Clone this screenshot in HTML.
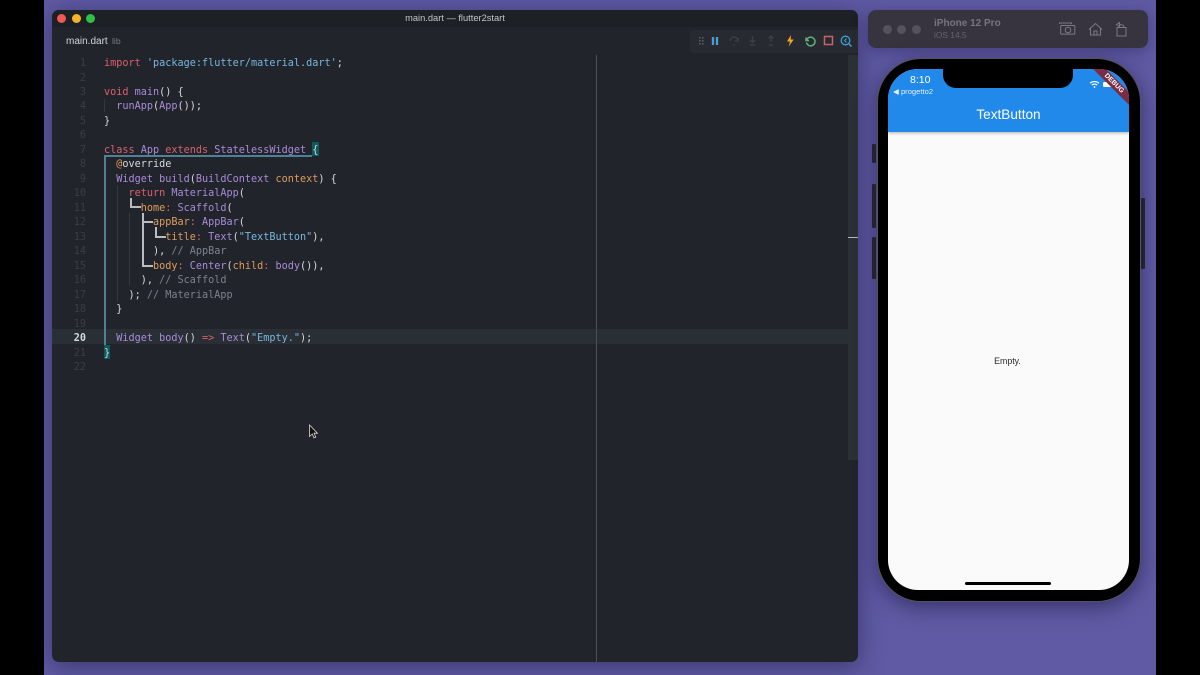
<!DOCTYPE html>
<html><head><meta charset="utf-8"><style>
html,body{margin:0;padding:0;background:#000;width:1200px;height:675px;overflow:hidden}
div{position:absolute;box-sizing:border-box}
#bg{left:44px;top:0;width:1112px;height:675px;background:#5f5aa3}
#win{left:52px;top:10px;width:806px;height:652px;background:#21252b;border-radius:7px;overflow:hidden;box-shadow:0 4px 24px rgba(30,25,70,.55)}
.c{position:absolute;border-radius:50%;width:9px;height:9px;top:14px}
.code{font:10.18px/14.476px "DejaVu Sans Mono","Liberation Mono",monospace;white-space:pre;color:#d5d8de;margin-top:2px;filter:blur(.25px)}
.n{left:60px;width:26px;text-align:right;color:#383e46;font:10.18px/14.476px "DejaVu Sans Mono",monospace;margin-top:2px;filter:blur(.3px)}
.k{color:#dc5f6e}.p{color:#a98ad8}.s{color:#78b6de}.o{color:#de9a5e}.m{color:#7c828c}
.g{background:#343941}.b{background:#4f8095}.w{background:#b9bcc1}
.sans{font-family:"Liberation Sans",sans-serif}
</style></head><body>
<div id="bg"></div>
<div id="win"></div>
<div style="left:52px;top:10px;width:806px;height:17px;background:#1d2025;border-radius:7px 7px 0 0"></div>
<div class="c" style="left:57px;background:#ee5a52"></div>
<div class="c" style="left:72px;background:#f4b32b"></div>
<div class="c" style="left:86px;background:#2fc143"></div>
<div class="sans" style="left:52px;top:12px;width:806px;text-align:center;font-size:9.3px;line-height:13px;color:#c3c6cb">main.dart — flutter2start</div>
<div class="sans" style="left:66px;top:35px;font-size:10px;line-height:13px;color:#d2d5da">main.dart</div>
<div class="sans" style="left:112px;top:35px;font-size:8.6px;line-height:13px;color:#777c85">lib</div>

<div style="left:52px;top:329px;width:806px;height:15px;background:#2a2e35"></div>
<div style="left:596px;top:55px;width:1px;height:607px;background:#4a4e55"></div>
<div style="left:848px;top:55px;width:10px;height:405px;background:#2b3035"></div>
<div style="left:848px;top:237px;width:10px;height:1px;background:#b5b8bc"></div>

<div class="n" style="top:55px">1</div>
<div class="n" style="top:69.5px">2</div>
<div class="n" style="top:84px">3</div>
<div class="n" style="top:98.4px">4</div>
<div class="n" style="top:112.9px">5</div>
<div class="n" style="top:127.4px">6</div>
<div class="n" style="top:141.9px">7</div>
<div class="n" style="top:156.3px">8</div>
<div class="n" style="top:170.8px">9</div>
<div class="n" style="top:185.3px">10</div>
<div class="n" style="top:199.8px">11</div>
<div class="n" style="top:214.2px">12</div>
<div class="n" style="top:228.7px">13</div>
<div class="n" style="top:243.2px">14</div>
<div class="n" style="top:257.7px">15</div>
<div class="n" style="top:272.1px">16</div>
<div class="n" style="top:286.6px">17</div>
<div class="n" style="top:301.1px">18</div>
<div class="n" style="top:315.6px">19</div>
<div class="n" style="top:330px;color:#d5d8de;font-weight:bold">20</div>
<div class="n" style="top:344.5px">21</div>
<div class="n" style="top:359px">22</div>

<div style="left:312px;top:142px;width:7px;height:14px;background:#0f5a5c"></div>
<div style="left:104px;top:345px;width:6px;height:14px;background:#0f5a5c"></div>
<div class="b" style="left:104px;top:155px;width:208px;height:1.500px"></div>
<div class="b" style="left:104px;top:155px;width:1.500px;height:190px"></div>
<div class="g" style="left:104px;top:99px;width:1px;height:13px"></div>
<div class="g" style="left:117px;top:185px;width:1px;height:116px"></div>
<div class="g" style="left:129px;top:213px;width:1px;height:73px"></div>
<div class="w" style="left:130px;top:198px;width:1.500px;height:9px"></div>
<div class="w" style="left:130px;top:206px;width:11px;height:1.500px"></div>
<div class="w" style="left:142px;top:213px;width:2px;height:53px"></div>
<div class="w" style="left:142px;top:221px;width:11px;height:1.500px"></div>
<div class="w" style="left:142px;top:265px;width:11px;height:1.500px"></div>
<div class="w" style="left:155px;top:227px;width:1.500px;height:10px"></div>
<div class="w" style="left:155px;top:236px;width:11px;height:1.500px"></div>

<div class="code" style="left:104px;top:55px"><span class="k">import</span> <span class="s">'package:flutter/material.dart'</span>;</div>
<div class="code" style="left:104px;top:84px"><span class="k">void</span> <span class="p">main</span>() {</div>
<div class="code" style="left:104px;top:98.4px">  <span class="p">runApp</span>(<span class="p">App</span>());</div>
<div class="code" style="left:104px;top:112.9px">}</div>
<div class="code" style="left:104px;top:141.9px"><span class="k">class</span> <span class="p">App</span> <span class="k">extends</span> <span class="p">StatelessWidget</span> {</div>
<div class="code" style="left:104px;top:156.3px">  <span class="o">@</span>override</div>
<div class="code" style="left:104px;top:170.8px">  <span class="p">Widget</span> <span class="p">build</span>(<span class="p">BuildContext</span> <span class="o">context</span>) {</div>
<div class="code" style="left:104px;top:185.3px">    <span class="k">return</span> <span class="p">MaterialApp</span>(</div>
<div class="code" style="left:104px;top:199.8px">      <span class="o">home</span><span class="k">:</span> <span class="p">Scaffold</span>(</div>
<div class="code" style="left:104px;top:214.2px">        <span class="o">appBar</span><span class="k">:</span> <span class="p">AppBar</span>(</div>
<div class="code" style="left:104px;top:228.7px">          <span class="o">title</span><span class="k">:</span> <span class="p">Text</span>(<span class="s">"TextButton"</span>),</div>
<div class="code" style="left:104px;top:243.2px">        ), <span class="m">// AppBar</span></div>
<div class="code" style="left:104px;top:257.7px">        <span class="o">body</span><span class="k">:</span> <span class="p">Center</span>(<span class="o">child</span><span class="k">:</span> <span class="p">body</span>()),</div>
<div class="code" style="left:104px;top:272.1px">      ), <span class="m">// Scaffold</span></div>
<div class="code" style="left:104px;top:286.6px">    ); <span class="m">// MaterialApp</span></div>
<div class="code" style="left:104px;top:301.1px">  }</div>
<div class="code" style="left:104px;top:330px">  <span class="p">Widget</span> <span class="p">body</span>() <span class="k">=&gt;</span> <span class="p">Text</span>(<span class="s">"Empty."</span>);</div>
<div class="code" style="left:104px;top:344.5px">}</div>

<!-- debug toolbar -->
<div style="left:690px;top:30px;width:168px;height:23px;background:#272b31;border-radius:3px 0 0 3px"></div>
<svg style="position:absolute;left:690px;top:30px" width="168" height="23" viewBox="690 30 168 23" fill="none">
<g fill="#565b63"><rect x="699" y="37" width="1.600" height="1.600"/><rect x="702" y="37" width="1.600" height="1.600"/><rect x="699" y="40" width="1.600" height="1.600"/><rect x="702" y="40" width="1.600" height="1.600"/><rect x="699" y="43" width="1.600" height="1.600"/><rect x="702" y="43" width="1.600" height="1.600"/></g>
<path d="M713 37v8M717 37v8" stroke="#4f9bd0" stroke-width="2.300"/>
<path d="M730 41a4 4 0 0 1 8 0M738 38v3h-3M734 44v1.500" stroke="#3c4148" stroke-width="1.300"/>
<path d="M752.500 36v6M750 40l2.500 2.500 2.500-2.500M750 45h5" stroke="#3c4148" stroke-width="1.300"/>
<path d="M771 42v-6M768.500 38.500l2.500-2.500 2.500 2.500M769 45h4" stroke="#3c4148" stroke-width="1.300"/>
<path d="M791 35l-4 6.500h3l-1.300 5 5-7h-3z" fill="#f2a922"/>
<path d="M806 37.500v3h3M806.500 40.500a4.300 4.300 0 1 1 0 2" stroke="#5cb578" stroke-width="1.500"/>
<rect x="824.500" y="36.500" width="8" height="8" stroke="#c9606a" stroke-width="1.500"/>
<circle cx="845.500" cy="40.500" r="4.300" stroke="#3f9fd8" stroke-width="1.300"/><path d="M849 44l2.500 2.500" stroke="#3f9fd8" stroke-width="1.500"/><path d="M846.500 38.500l-2 2 2 2" stroke="#3f9fd8" stroke-width="1"/>
</svg>

<!-- cursor -->
<svg style="position:absolute;left:305px;top:422px" width="16" height="20" viewBox="0 0 16 20"><path d="M4.500 3v11.500l2.700-2.500 1.800 3.800 1.800-.8-1.800-3.800h3.500z" fill="#111" stroke="#d8d8d8" stroke-width=".8"/></svg>

<!-- simulator title bar -->
<div style="left:868px;top:10px;width:280px;height:38px;background:#37343f;border-radius:8px;box-shadow:0 3px 14px rgba(30,25,70,.4)"></div>
<div class="c" style="left:883px;top:25px;background:#55525c"></div>
<div class="c" style="left:897px;top:25px;background:#55525c"></div>
<div class="c" style="left:912px;top:25px;background:#55525c"></div>
<div class="sans" style="left:934px;top:17px;font-size:10px;font-weight:bold;line-height:14px;color:#77757e">iPhone 12 Pro</div>
<div class="sans" style="left:934px;top:29px;font-size:8.400px;line-height:12px;color:#64626b">iOS 14.5</div>
<svg style="position:absolute;left:1055px;top:18px" width="80" height="22" viewBox="0 0 80 22" fill="none" stroke="#7b7982" stroke-width="1">
<path d="M5 6.500V5.500h12v1M7 8h12.500a.8.800 0 0 1 .8.8v7a.8.800 0 0 1-.8.8H7a.8.800 0 0 1-.8-.8v-7A.8.800 0 0 1 7 8z" transform="translate(-.5 -.5)"/><circle cx="13" cy="12" r="2.800"/>
<path d="M34 11.500l6.500-6 6.500 6M35.500 10.500v6.500h10v-6.500M39 17v-4h3v4"/>
<path d="M62 9.500h9v8.500h-9zM61.500 6.500l3 -2v4zM64 6.500c3 0 5 .5 5 2.500"/>
</svg>

<!-- phone -->
<div style="left:872px;top:144px;width:4px;height:19px;background:#26252c;border-radius:1px"></div>
<div style="left:872px;top:184px;width:4px;height:44px;background:#26252c;border-radius:1px"></div>
<div style="left:872px;top:237px;width:4px;height:42px;background:#26252c;border-radius:1px"></div>
<div style="left:1141px;top:198px;width:4px;height:71px;background:#26252c;border-radius:1px"></div>
<div style="left:877px;top:58px;width:264px;height:544px;background:#000;border-radius:44px;border:1.500px solid #55545c;box-shadow:0 5px 20px rgba(30,25,70,.6)"></div>
<div style="left:888px;top:69px;width:241px;height:521px;background:#fafafa;border-radius:30px;overflow:hidden">
  <div style="left:0;top:0;width:241px;height:63px;background:#2089ea;box-shadow:0 1px 3px rgba(0,0,0,.3)"></div>
  <div style="left:55px;top:0;width:130px;height:19px;background:#000;border-radius:0 0 13px 13px"></div>
  <div class="sans" style="left:0;top:38px;width:241px;text-align:center;font-size:13.600px;line-height:16px;color:#fff">TextButton</div>
  <div class="sans" style="left:22px;top:5px;font-size:10.500px;line-height:12px;color:#fff">8:10</div>
  <div class="sans" style="left:5px;top:18px;font-size:7.600px;line-height:9px;color:#e6f0fb">◀ progetto2</div>
  <svg style="position:absolute;left:201px;top:11px" width="11" height="9" viewBox="0 0 12 10" fill="none" stroke="#fff" stroke-width="1.300"><path d="M1 3.500a8 8 0 0 1 10 0M3 5.600a5 5 0 0 1 6 0"/><circle cx="6" cy="7.800" r="1" fill="#fff" stroke="none"/></svg>
  <div style="left:215px;top:13px;width:13px;height:5px;background:#fff;border-radius:1.500px"></div>
  <div style="left:191px;top:10px;width:70px;height:9px;background:#7a2d45;transform:rotate(45deg)"></div>
  <div class="sans" style="left:191px;top:10px;width:70px;height:9px;transform:rotate(45deg);text-align:center;font-size:6.800px;font-weight:bold;line-height:9px;color:#fff">DEBUG</div>
  <div class="sans" style="left:-1px;top:286px;width:241px;text-align:center;font-size:8.800px;line-height:12px;color:#2b2b2b">Empty.</div>
  <div style="left:77px;top:513px;width:86px;height:3px;background:#000;border-radius:2px"></div>
</div>
</body></html>
